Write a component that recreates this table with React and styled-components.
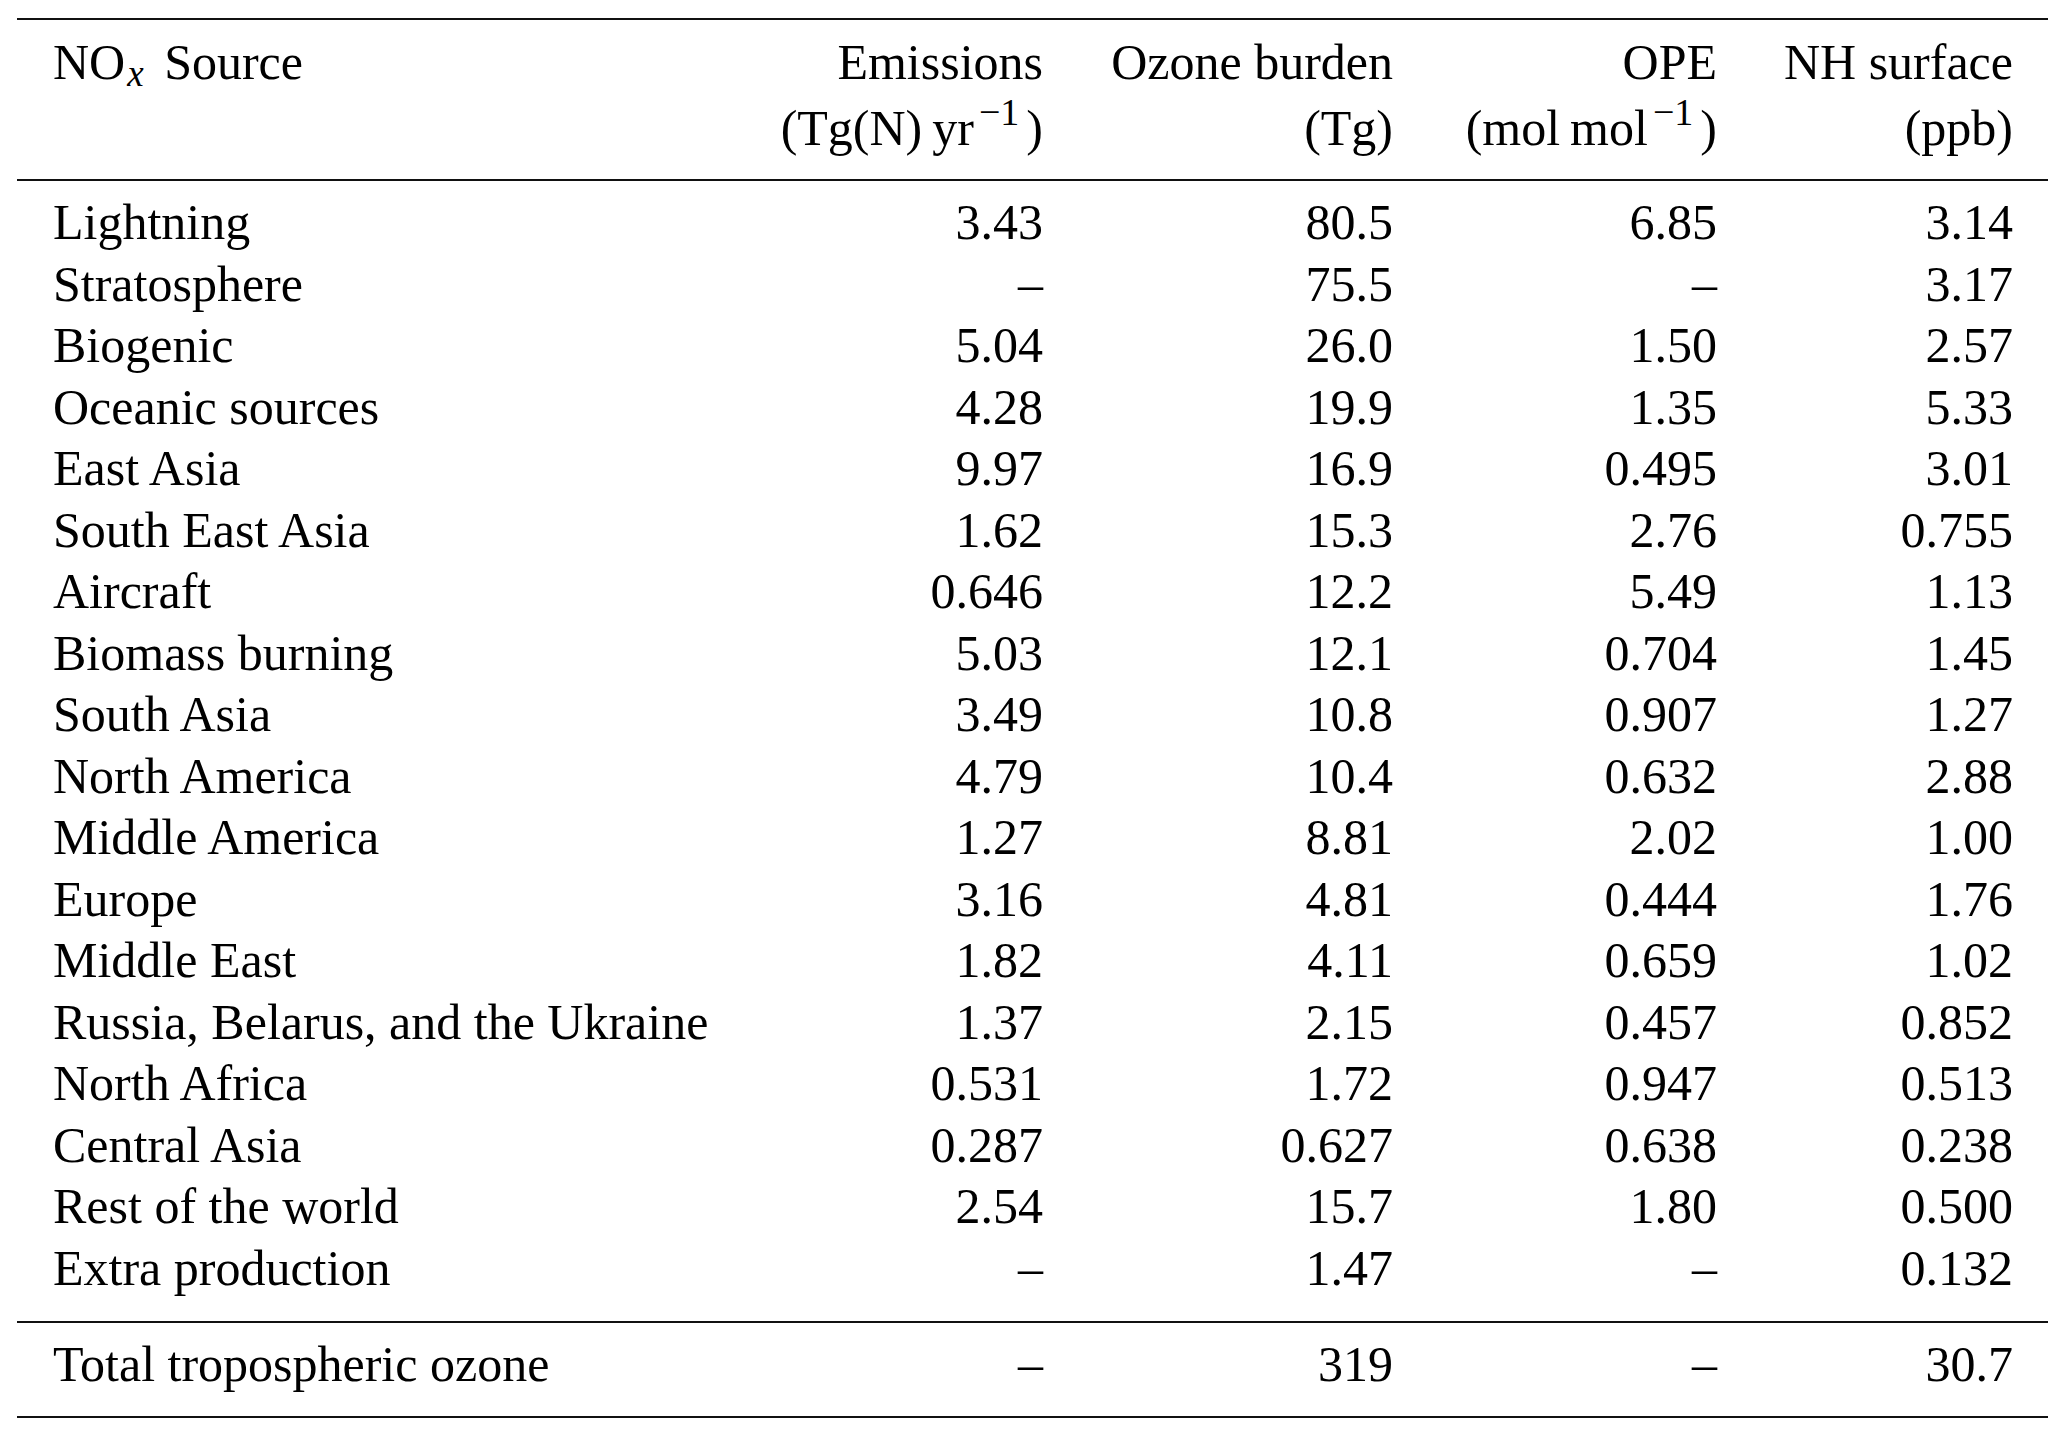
import React from "react";
import styled, { createGlobalStyle } from "styled-components";

const GlobalStyle = createGlobalStyle`
  html, body {
    margin: 0;
    padding: 0;
    background: #ffffff;
  }
  body {
    font-family: "Liberation Serif", "Times New Roman", serif;
    color: #000000;
  }
`;

const Frame = styled.div`
  margin: 18px 0 0 17px;
  width: 2031px;
  border-top: 2px solid #111;
  border-bottom: 2px solid #111;
  font-family: "Liberation Serif", "Times New Roman", serif;
  font-size: 50px;
  color: #000;
`;

const Section = styled.div`
  padding-top: ${(p) => p.$top}px;
  padding-bottom: ${(p) => p.$bottom}px;
  border-top: ${(p) => (p.$ruled ? "2px solid #111" : "none")};
`;

const Row = styled.div`
  display: grid;
  grid-template-columns: 703px 323px 350px 324px 331px;
  line-height: 61.5px;
`;

const Cell = styled.div`
  text-align: ${(p) => (p.$first ? "left" : "right")};
  padding-left: ${(p) => (p.$first ? "36px" : "0")};
  padding-right: ${(p) => (p.$last ? "35px" : "0")};
  white-space: nowrap;
`;

const Line = styled.div`
  line-height: 61.5px;
  margin-top: ${(p) => (p.$second ? "4.5px" : "0")};
`;

const Sub = styled.span`
  font-size: 37px;
  font-style: italic;
  line-height: 0;
  position: relative;
  top: 7px;
  margin-left: 2px;
  margin-right: 8px;
`;

const Sup = styled.span`
  font-size: 38px;
  line-height: 0;
  position: relative;
  top: -20px;
  margin-left: 5px;
  margin-right: 7px;
`;

const Unit = ({ children, sup }) => (
  <>
    ({children}
    {sup ? <Sup>−1</Sup> : null})
  </>
);

const rows = [
  ["Lightning", "3.43", "80.5", "6.85", "3.14"],
  ["Stratosphere", "–", "75.5", "–", "3.17"],
  ["Biogenic", "5.04", "26.0", "1.50", "2.57"],
  ["Oceanic sources", "4.28", "19.9", "1.35", "5.33"],
  ["East Asia", "9.97", "16.9", "0.495", "3.01"],
  ["South East Asia", "1.62", "15.3", "2.76", "0.755"],
  ["Aircraft", "0.646", "12.2", "5.49", "1.13"],
  ["Biomass burning", "5.03", "12.1", "0.704", "1.45"],
  ["South Asia", "3.49", "10.8", "0.907", "1.27"],
  ["North America", "4.79", "10.4", "0.632", "2.88"],
  ["Middle America", "1.27", "8.81", "2.02", "1.00"],
  ["Europe", "3.16", "4.81", "0.444", "1.76"],
  ["Middle East", "1.82", "4.11", "0.659", "1.02"],
  ["Russia, Belarus, and the Ukraine", "1.37", "2.15", "0.457", "0.852"],
  ["North Africa", "0.531", "1.72", "0.947", "0.513"],
  ["Central Asia", "0.287", "0.627", "0.638", "0.238"],
  ["Rest of the world", "2.54", "15.7", "1.80", "0.500"],
  ["Extra production", "–", "1.47", "–", "0.132"],
];

const total = ["Total tropospheric ozone", "–", "319", "–", "30.7"];

const DataRow = ({ cells }) => (
  <Row>
    {cells.map((c, i) => (
      <Cell key={i} $first={i === 0} $last={i === cells.length - 1}>
        {c}
      </Cell>
    ))}
  </Row>
);

export default function App() {
  return (
    <>
      <GlobalStyle />
      <Frame>
        <Section $top={12.4} $bottom={19.1}>
          <Row>
            <Cell $first>
              <Line>
                NO<Sub>x</Sub> Source
              </Line>
            </Cell>
            <Cell>
              <Line>Emissions</Line>
              <Line $second>
                <Unit sup>Tg(N)&thinsp;yr</Unit>
              </Line>
            </Cell>
            <Cell>
              <Line>Ozone burden</Line>
              <Line $second>
                <Unit>Tg</Unit>
              </Line>
            </Cell>
            <Cell>
              <Line>OPE</Line>
              <Line $second>
                <Unit sup>mol&thinsp;mol</Unit>
              </Line>
            </Cell>
            <Cell $last>
              <Line>NH surface</Line>
              <Line $second>
                <Unit>ppb</Unit>
              </Line>
            </Cell>
          </Row>
        </Section>
        <Section $ruled $top={11.4} $bottom={21.6}>
          {rows.map((r) => (
            <DataRow key={r[0]} cells={r} />
          ))}
        </Section>
        <Section $ruled $top={11.4} $bottom={20.1}>
          <DataRow cells={total} />
        </Section>
      </Frame>
    </>
  );
}
